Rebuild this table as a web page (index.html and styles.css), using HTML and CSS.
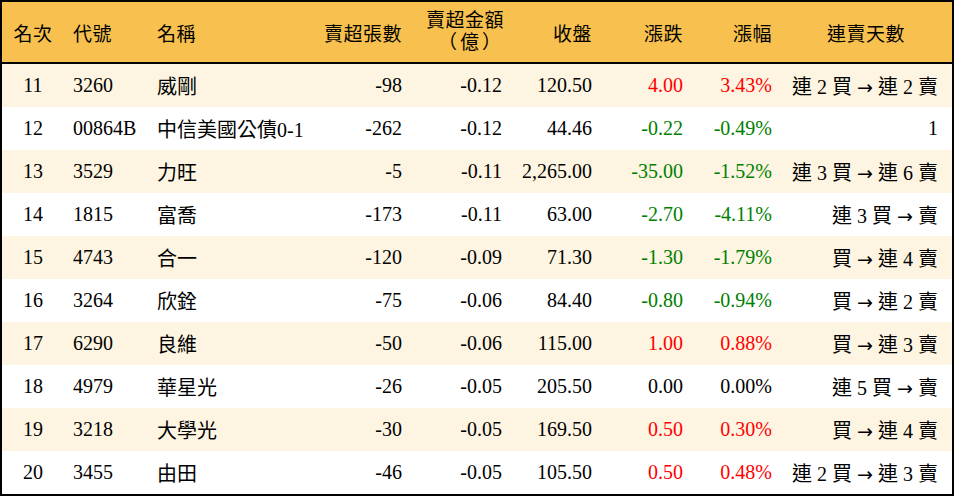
FILE: index.html
```html
<!DOCTYPE html>
<html lang="zh-Hant">
<head>
<meta charset="utf-8">
<title>賣超排行</title>
<link rel="stylesheet" href="styles.css">
</head>
<body>
<div class="board">
  <div class="row head">
    <div class="c1">名次</div>
    <div class="c2">代號</div>
    <div class="c3">名稱</div>
    <div class="num">賣超張數</div>
    <div class="num two">賣超金額<br><span class="unit">（億）</span></div>
    <div class="num">收盤</div>
    <div class="num">漲跌</div>
    <div class="num">漲幅</div>
    <div class="c9h">連賣天數</div>
  </div>
  <div class="row alt">
    <div class="c1">11</div><div class="c2">3260</div><div class="c3">威剛</div>
    <div class="num">-98</div><div class="num">-0.12</div><div class="num">120.50</div>
    <div class="num up">4.00</div><div class="num up">3.43%</div><div class="c9">連 2 買 <span class="arr">→</span> 連 2 賣</div>
  </div>
  <div class="row">
    <div class="c1">12</div><div class="c2">00864B</div><div class="c3">中信美國公債0-1</div>
    <div class="num">-262</div><div class="num">-0.12</div><div class="num">44.46</div>
    <div class="num down">-0.22</div><div class="num down">-0.49%</div><div class="c9">1</div>
  </div>
  <div class="row alt">
    <div class="c1">13</div><div class="c2">3529</div><div class="c3">力旺</div>
    <div class="num">-5</div><div class="num">-0.11</div><div class="num">2,265.00</div>
    <div class="num down">-35.00</div><div class="num down">-1.52%</div><div class="c9">連 3 買 <span class="arr">→</span> 連 6 賣</div>
  </div>
  <div class="row">
    <div class="c1">14</div><div class="c2">1815</div><div class="c3">富喬</div>
    <div class="num">-173</div><div class="num">-0.11</div><div class="num">63.00</div>
    <div class="num down">-2.70</div><div class="num down">-4.11%</div><div class="c9">連 3 買 <span class="arr">→</span> 賣</div>
  </div>
  <div class="row alt">
    <div class="c1">15</div><div class="c2">4743</div><div class="c3">合一</div>
    <div class="num">-120</div><div class="num">-0.09</div><div class="num">71.30</div>
    <div class="num down">-1.30</div><div class="num down">-1.79%</div><div class="c9">買 <span class="arr">→</span> 連 4 賣</div>
  </div>
  <div class="row">
    <div class="c1">16</div><div class="c2">3264</div><div class="c3">欣銓</div>
    <div class="num">-75</div><div class="num">-0.06</div><div class="num">84.40</div>
    <div class="num down">-0.80</div><div class="num down">-0.94%</div><div class="c9">買 <span class="arr">→</span> 連 2 賣</div>
  </div>
  <div class="row alt">
    <div class="c1">17</div><div class="c2">6290</div><div class="c3">良維</div>
    <div class="num">-50</div><div class="num">-0.06</div><div class="num">115.00</div>
    <div class="num up">1.00</div><div class="num up">0.88%</div><div class="c9">買 <span class="arr">→</span> 連 3 賣</div>
  </div>
  <div class="row">
    <div class="c1">18</div><div class="c2">4979</div><div class="c3">華星光</div>
    <div class="num">-26</div><div class="num">-0.05</div><div class="num">205.50</div>
    <div class="num">0.00</div><div class="num">0.00%</div><div class="c9">連 5 買 <span class="arr">→</span> 賣</div>
  </div>
  <div class="row alt">
    <div class="c1">19</div><div class="c2">3218</div><div class="c3">大學光</div>
    <div class="num">-30</div><div class="num">-0.05</div><div class="num">169.50</div>
    <div class="num up">0.50</div><div class="num up">0.30%</div><div class="c9">買 <span class="arr">→</span> 連 4 賣</div>
  </div>
  <div class="row">
    <div class="c1">20</div><div class="c2">3455</div><div class="c3">由田</div>
    <div class="num">-46</div><div class="num">-0.05</div><div class="num">105.50</div>
    <div class="num up">0.50</div><div class="num up">0.48%</div><div class="c9">連 2 買 <span class="arr">→</span> 連 3 賣</div>
  </div>
</div>
</body>
</html>
```

FILE: styles.css
```css
html, body {
  margin: 0;
  padding: 0;
  background: #ffffff;
}

body {
  font-family: "Liberation Serif", "Noto Sans CJK TC", serif;
  font-size: 20px;
  color: #000000;
}

.board {
  width: 950px;
  border: 2px solid #000000;
}

.row {
  display: grid;
  grid-template-columns: 62px 85px 151px 110px 100px 90px 91px 89px 172px;
  height: 43px;
  align-items: center;
  background: #ffffff;
  white-space: nowrap;
}

.row.alt {
  background: #fdf5e1;
}

.row.head {
  height: 60px;
  background: #f8c04e;
  border-bottom: 2px solid #000000;
  font-size: 19px;
  letter-spacing: 0.5px;
}

.c1 {
  text-align: center;
}

.c2 {
  padding-left: 9px;
}

.c3 {
  padding-left: 8px;
}

.num {
  text-align: right;
  padding-right: 8px;
}

.two {
  line-height: 22px;
  padding-right: 6px;
}

.unit {
  letter-spacing: 3px;
}

.c9h {
  text-align: center;
}

.c9 {
  text-align: right;
  padding-right: 14px;
}

.arr {
  font-family: "DejaVu Sans", sans-serif;
  font-size: 19px;
}

.up {
  color: #ff0000;
}

.down {
  color: #008000;
}
```
